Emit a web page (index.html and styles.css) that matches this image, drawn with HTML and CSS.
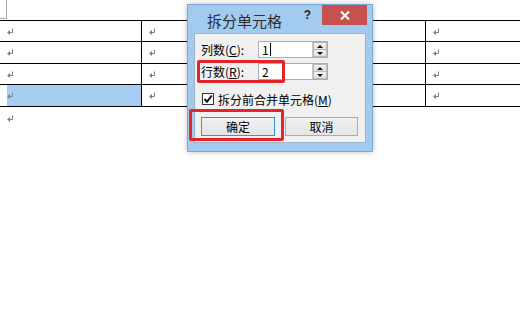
FILE: index.html
```html
<!DOCTYPE html>
<html lang="zh-CN">
<head>
    <meta charset="UTF-8">
    <meta name="viewport" content="width=device-width, initial-scale=1.0">
    <title>拆分单元格</title>
    <link rel="stylesheet" href="styles.css">
</head>
<body>
    <div class="page">
        <div class="crop-mark"></div>
        <table class="doc-table">
            <colgroup>
                <col class="col">
                <col class="col">
                <col class="col">
                <col>
            </colgroup>
            <tr>
                <td><div class="cell"><svg class="para" width="7" height="7" viewBox="0 0 7 7"><path d="M5.5 0.5V4.5H2" fill="none" stroke="#7f7f7f"/><path d="M0 4.5L3 2V7Z" fill="#7f7f7f"/></svg></div></td>
                <td><div class="cell"><svg class="para" width="7" height="7" viewBox="0 0 7 7"><path d="M5.5 0.5V4.5H2" fill="none" stroke="#7f7f7f"/><path d="M0 4.5L3 2V7Z" fill="#7f7f7f"/></svg></div></td>
                <td><div class="cell"><svg class="para" width="7" height="7" viewBox="0 0 7 7"><path d="M5.5 0.5V4.5H2" fill="none" stroke="#7f7f7f"/><path d="M0 4.5L3 2V7Z" fill="#7f7f7f"/></svg></div></td>
                <td class="last"><div class="cell"><svg class="para" width="7" height="7" viewBox="0 0 7 7"><path d="M5.5 0.5V4.5H2" fill="none" stroke="#7f7f7f"/><path d="M0 4.5L3 2V7Z" fill="#7f7f7f"/></svg></div></td>
            </tr>
            <tr class="tall">
                <td><div class="cell"><svg class="para" width="7" height="7" viewBox="0 0 7 7"><path d="M5.5 0.5V4.5H2" fill="none" stroke="#7f7f7f"/><path d="M0 4.5L3 2V7Z" fill="#7f7f7f"/></svg></div></td>
                <td><div class="cell"><svg class="para" width="7" height="7" viewBox="0 0 7 7"><path d="M5.5 0.5V4.5H2" fill="none" stroke="#7f7f7f"/><path d="M0 4.5L3 2V7Z" fill="#7f7f7f"/></svg></div></td>
                <td><div class="cell"><svg class="para" width="7" height="7" viewBox="0 0 7 7"><path d="M5.5 0.5V4.5H2" fill="none" stroke="#7f7f7f"/><path d="M0 4.5L3 2V7Z" fill="#7f7f7f"/></svg></div></td>
                <td class="last"><div class="cell"><svg class="para" width="7" height="7" viewBox="0 0 7 7"><path d="M5.5 0.5V4.5H2" fill="none" stroke="#7f7f7f"/><path d="M0 4.5L3 2V7Z" fill="#7f7f7f"/></svg></div></td>
            </tr>
            <tr>
                <td><div class="cell"><svg class="para" width="7" height="7" viewBox="0 0 7 7"><path d="M5.5 0.5V4.5H2" fill="none" stroke="#7f7f7f"/><path d="M0 4.5L3 2V7Z" fill="#7f7f7f"/></svg></div></td>
                <td><div class="cell"><svg class="para" width="7" height="7" viewBox="0 0 7 7"><path d="M5.5 0.5V4.5H2" fill="none" stroke="#7f7f7f"/><path d="M0 4.5L3 2V7Z" fill="#7f7f7f"/></svg></div></td>
                <td><div class="cell"><svg class="para" width="7" height="7" viewBox="0 0 7 7"><path d="M5.5 0.5V4.5H2" fill="none" stroke="#7f7f7f"/><path d="M0 4.5L3 2V7Z" fill="#7f7f7f"/></svg></div></td>
                <td class="last"><div class="cell"><svg class="para" width="7" height="7" viewBox="0 0 7 7"><path d="M5.5 0.5V4.5H2" fill="none" stroke="#7f7f7f"/><path d="M0 4.5L3 2V7Z" fill="#7f7f7f"/></svg></div></td>
            </tr>
            <tr class="tall">
                <td class="sel"><div class="cell"><svg class="para" width="7" height="7" viewBox="0 0 7 7"><path d="M5.5 0.5V4.5H2" fill="none" stroke="#6f8aa8"/><path d="M0 4.5L3 2V7Z" fill="#6f8aa8"/></svg></div></td>
                <td><div class="cell"><svg class="para" width="7" height="7" viewBox="0 0 7 7"><path d="M5.5 0.5V4.5H2" fill="none" stroke="#7f7f7f"/><path d="M0 4.5L3 2V7Z" fill="#7f7f7f"/></svg></div></td>
                <td><div class="cell"><svg class="para" width="7" height="7" viewBox="0 0 7 7"><path d="M5.5 0.5V4.5H2" fill="none" stroke="#7f7f7f"/><path d="M0 4.5L3 2V7Z" fill="#7f7f7f"/></svg></div></td>
                <td class="last"><div class="cell"><svg class="para" width="7" height="7" viewBox="0 0 7 7"><path d="M5.5 0.5V4.5H2" fill="none" stroke="#7f7f7f"/><path d="M0 4.5L3 2V7Z" fill="#7f7f7f"/></svg></div></td>
            </tr>
        </table>
        <div class="after"><svg class="para" width="7" height="7" viewBox="0 0 7 7"><path d="M5.5 0.5V4.5H2" fill="none" stroke="#7f7f7f"/><path d="M0 4.5L3 2V7Z" fill="#7f7f7f"/></svg></div>
    </div>

    <div class="dialog">
        <div class="titlebar">
            <span class="title">拆分单元格</span>
            <span class="help">?</span>
            <span class="close"><svg width="10" height="9" viewBox="0 0 10 9"><path d="M1 0.5L9 8.5M9 0.5L1 8.5" stroke="#fff" stroke-width="2"/></svg></span>
        </div>
        <div class="client">
            <div class="fields">
                <span class="label">列数(<u>C</u>):</span>
                <div class="spin">
                    <span class="value">1<i class="caret"></i></span>
                    <div class="spin-btns">
                        <span class="spin-btn"><i class="arrow-up"></i></span>
                        <span class="spin-btn"><i class="arrow-down"></i></span>
                    </div>
                </div>
                <span class="label">行数(<u>R</u>):</span>
                <div class="spin">
                    <span class="value">2</span>
                    <div class="spin-btns">
                        <span class="spin-btn"><i class="arrow-up"></i></span>
                        <span class="spin-btn"><i class="arrow-down"></i></span>
                    </div>
                </div>
            </div>
            <div class="check">
                <span class="box"><svg width="10" height="10" viewBox="0 0 10 10"><path d="M1.5 5L4 7.8L8.8 1.5" fill="none" stroke="#111" stroke-width="2"/></svg></span>
                <span>拆分前合并单元格(<u>M</u>)</span>
            </div>
            <div class="buttons">
                <span class="btn btn-default">确定</span>
                <span class="btn">取消</span>
            </div>
        </div>
        <div class="annot annot-rows"></div>
        <div class="annot annot-ok"></div>
    </div>
</body>
</html>
```

FILE: styles.css
```css
html, body {
    margin: 0;
    width: 520px;
    height: 330px;
    overflow: hidden;
    background: #fff;
}
body {
    position: relative;
    font-family: "Noto Sans CJK SC", "Liberation Sans", sans-serif;
    font-size: 12px;
    color: #000;
}

/* document behind the dialog */
.crop-mark {
    width: 6px;
    height: 18px;
    border-right: 1px solid #a6a6a6;
    border-bottom: 1px solid #a6a6a6;
}
.doc-table {
    margin-top: 1px;
    width: 520px;
    table-layout: fixed;
    border-collapse: separate;
    border-spacing: 0;
    border-top: 1px solid #000;
}
.doc-table .col {
    width: 142px;
}
.doc-table td {
    padding: 0;
    border-right: 1px solid #000;
    border-bottom: 1px solid #000;
    line-height: 0;
}
.doc-table td.last {
    border-right: none;
}
.cell {
    height: 20px;
    padding-left: 7px;
    display: flex;
    align-items: center;
}
.tall .cell {
    height: 21px;
}
.sel .cell {
    margin-left: 7px;
    padding-left: 0;
    background: #a9cdf1;
}
.para {
    display: block;
}
.after {
    height: 22px;
    padding-left: 7px;
    display: flex;
    align-items: center;
}

/* dialog */
.dialog {
    position: absolute;
    left: 187px;
    top: 4px;
    width: 186px;
    height: 148px;
    box-sizing: border-box;
    border: 1px solid #7aa7d6;
    background: #a3cbf0;
    box-shadow: 0 0 6px rgba(0, 0, 0, 0.25);
}
.titlebar {
    height: 28px;
    display: flex;
    align-items: center;
}
.title {
    padding-left: 19px;
    padding-top: 2px;
    font-size: 15px;
    color: #2e2e2e;
}
.help {
    margin-left: auto;
    align-self: flex-start;
    margin-top: 3px;
    font-family: "Liberation Sans", sans-serif;
    font-weight: bold;
    font-size: 12px;
    color: #1e1e1e;
}
.close {
    align-self: flex-start;
    margin-left: 11px;
    margin-right: 5px;
    width: 45px;
    height: 20px;
    background: #c75050;
    display: flex;
    align-items: center;
    justify-content: center;
}
.close svg {
    display: block;
}
.client {
    margin: 0 6px;
    padding: 7px 6px 6px;
    border: 1px solid #9fb4cb;
    background: #f0f0f0;
}
.fields {
    display: grid;
    grid-template-columns: 57px 70px;
    grid-auto-rows: 17px;
    row-gap: 5px;
    align-items: center;
}
.label {
    line-height: 17px;
}
.spin {
    height: 17px;
    box-sizing: border-box;
    border: 1px solid #abadb3;
    background: #fff;
    display: flex;
}
.value {
    flex: 1;
    padding-left: 3px;
    line-height: 15px;
    display: flex;
    align-items: center;
}
.caret {
    width: 1px;
    height: 13px;
    margin-left: 1px;
    background: #000;
}
.spin-btns {
    width: 14px;
    display: flex;
    flex-direction: column;
    border-left: 1px solid #c7c7c7;
}
.spin-btn {
    flex: 1;
    display: flex;
    align-items: center;
    justify-content: center;
    background: linear-gradient(#f4f4f4, #e3e3e3);
    border: 1px solid #b9b9b9;
}
.spin-btn + .spin-btn {
    border-top: none;
}
.arrow-up {
    border-left: 3px solid transparent;
    border-right: 3px solid transparent;
    border-bottom: 3px solid #111;
}
.arrow-down {
    border-left: 3px solid transparent;
    border-right: 3px solid transparent;
    border-top: 3px solid #111;
}
.check {
    margin-top: 13px;
    margin-left: 1px;
    height: 12px;
    display: flex;
    align-items: center;
    gap: 4px;
}
.box {
    width: 12px;
    height: 12px;
    box-sizing: border-box;
    border: 1px solid #333;
    background: #fff;
    display: flex;
    align-items: center;
    justify-content: center;
}
.box svg {
    display: block;
}
.buttons {
    margin-top: 12px;
    display: flex;
    gap: 10px;
}
.btn {
    width: 73px;
    height: 19px;
    box-sizing: border-box;
    border: 1px solid #acacac;
    background: linear-gradient(#f0f0f0, #e5e5e5);
    display: flex;
    align-items: center;
    justify-content: center;
}
.btn-default {
    width: 74px;
    border-color: #3c8fe3;
}

/* red annotation frames drawn over the dialog */
.annot {
    position: absolute;
    border: 3px solid #e5232b;
    border-radius: 2px;
}
.annot-rows {
    left: 9px;
    top: 55px;
    width: 82px;
    height: 17px;
}
.annot-ok {
    left: 1px;
    top: 104px;
    width: 89px;
    height: 26px;
}
```
